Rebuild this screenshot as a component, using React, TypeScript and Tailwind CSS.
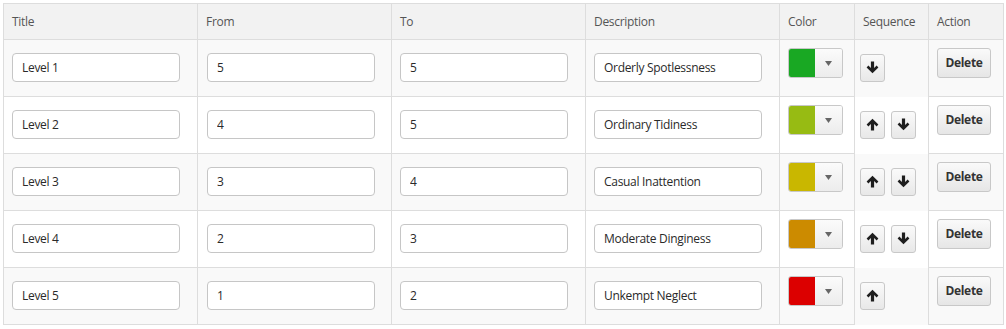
import React from "react";

type Row = { title: string; from: string; to: string; desc: string; color: string; up: boolean; down: boolean };

const rows: Row[] = [
  { title: "Level 1", from: "5", to: "5", desc: "Orderly Spotlessness", color: "#19a823", up: false, down: true },
  { title: "Level 2", from: "4", to: "5", desc: "Ordinary Tidiness", color: "#97bb13", up: true, down: true },
  { title: "Level 3", from: "3", to: "4", desc: "Casual Inattention", color: "#c9b700", up: true, down: true },
  { title: "Level 4", from: "2", to: "3", desc: "Moderate Dinginess", color: "#cc8b00", up: true, down: true },
  { title: "Level 5", from: "1", to: "2", desc: "Unkempt Neglect", color: "#dc0000", up: true, down: false },
];

function ArrowIcon({ dir }: { dir: "up" | "down" }) {
  return (
    <svg width="13" height="13" viewBox="0 0 13 13" className={dir === "down" ? "rotate-180" : ""}>
      <path d="M6.5 0.8 L12.4 6.6 L10.6 8.4 L8.1 5.9 L8.1 12.4 L4.9 12.4 L4.9 5.9 L2.4 8.4 L0.6 6.6 Z" fill="#1e1e1e" />
    </svg>
  );
}

function SeqButton({ dir }: { dir: "up" | "down" }) {
  return (
    <button className="w-[25px] h-[28px] rounded-[3px] border border-[#c8c8c8] bg-gradient-to-b from-[#fafafa] to-[#e8e8e8] flex items-center justify-center">
      <ArrowIcon dir={dir} />
    </button>
  );
}

function TextInput({ value }: { value: string }) {
  return (
    <input
      readOnly
      value={value}
      className="w-[168px] h-[29px] rounded-[4px] border border-[#c6c6c6] bg-white pl-[9px] text-[12px] text-[#2a2a2a] outline-none"
    />
  );
}

export default function App() {
  const font = { fontFamily: '"Open Sans", "Noto Sans", sans-serif' };
  const cell = "border-r border-b border-[#dddddd]";
  return (
    <div className="p-[3px] bg-white w-[1006px] h-[329px]" style={font}>
      <div className="grid grid-cols-[194px_194px_194px_194px_75px_74px_75px] w-[1001px] border-t border-l border-[#dddddd] text-[12px] tracking-[-0.3px]">
        {["Title", "From", "To", "Description", "Color", "Sequence", "Action"].map((h) => (
          <div key={h} className={`${cell} h-[36px] bg-[#f2f2f2] text-[#555] pl-[8px] flex items-center`}>
            {h}
          </div>
        ))}
        {rows.map((r, i) => {
          const bg = i % 2 === 0 ? "bg-[#f9f9f9]" : "bg-white";
          return (
            <React.Fragment key={r.title}>
              <div className={`${cell} ${bg} h-[57px] pl-[8px] pb-[2px] flex items-center`}>
                <TextInput value={r.title} />
              </div>
              <div className={`${cell} ${bg} h-[57px] pl-[9px] pb-[2px] flex items-center`}>
                <TextInput value={r.from} />
              </div>
              <div className={`${cell} ${bg} h-[57px] pl-[8px] pb-[2px] flex items-center`}>
                <TextInput value={r.to} />
              </div>
              <div className={`${cell} ${bg} h-[57px] pl-[8px] pb-[2px] flex items-center`}>
                <TextInput value={r.desc} />
              </div>
              <div className={`${cell} ${bg} h-[57px] pl-[8px] pt-[8px]`}>
                <div className="flex w-[55px] h-[30px] rounded-[3px] border border-[#c8c8c8] overflow-hidden">
                  <div className="w-[26px] h-full" style={{ backgroundColor: r.color }} />
                  <div className="flex-1 bg-gradient-to-b from-[#fbfbfb] to-[#ececec] flex items-center justify-center">
                    <svg width="7" height="5" viewBox="0 0 7 5">
                      <path d="M0 0 L7 0 L3.5 5 Z" fill="#666" />
                    </svg>
                  </div>
                </div>
              </div>
              <div className={`border-r border-[#dddddd] ${bg} h-[57px] pl-[5px] pb-[2px] flex items-center gap-[6px]`}>
                {r.up && <SeqButton dir="up" />}
                {r.down && <SeqButton dir="down" />}
              </div>
              <div className={`${cell} ${bg} h-[57px] pl-[8px] pt-[8px]`}>
                <button className="w-[54px] h-[30px] rounded-[3px] border border-[#c8c8c8] bg-gradient-to-b from-[#fafafa] to-[#e6e6e6] text-[12px] font-bold text-[#333]">
                  Delete
                </button>
              </div>
            </React.Fragment>
          );
        })}
      </div>
    </div>
  );
}
